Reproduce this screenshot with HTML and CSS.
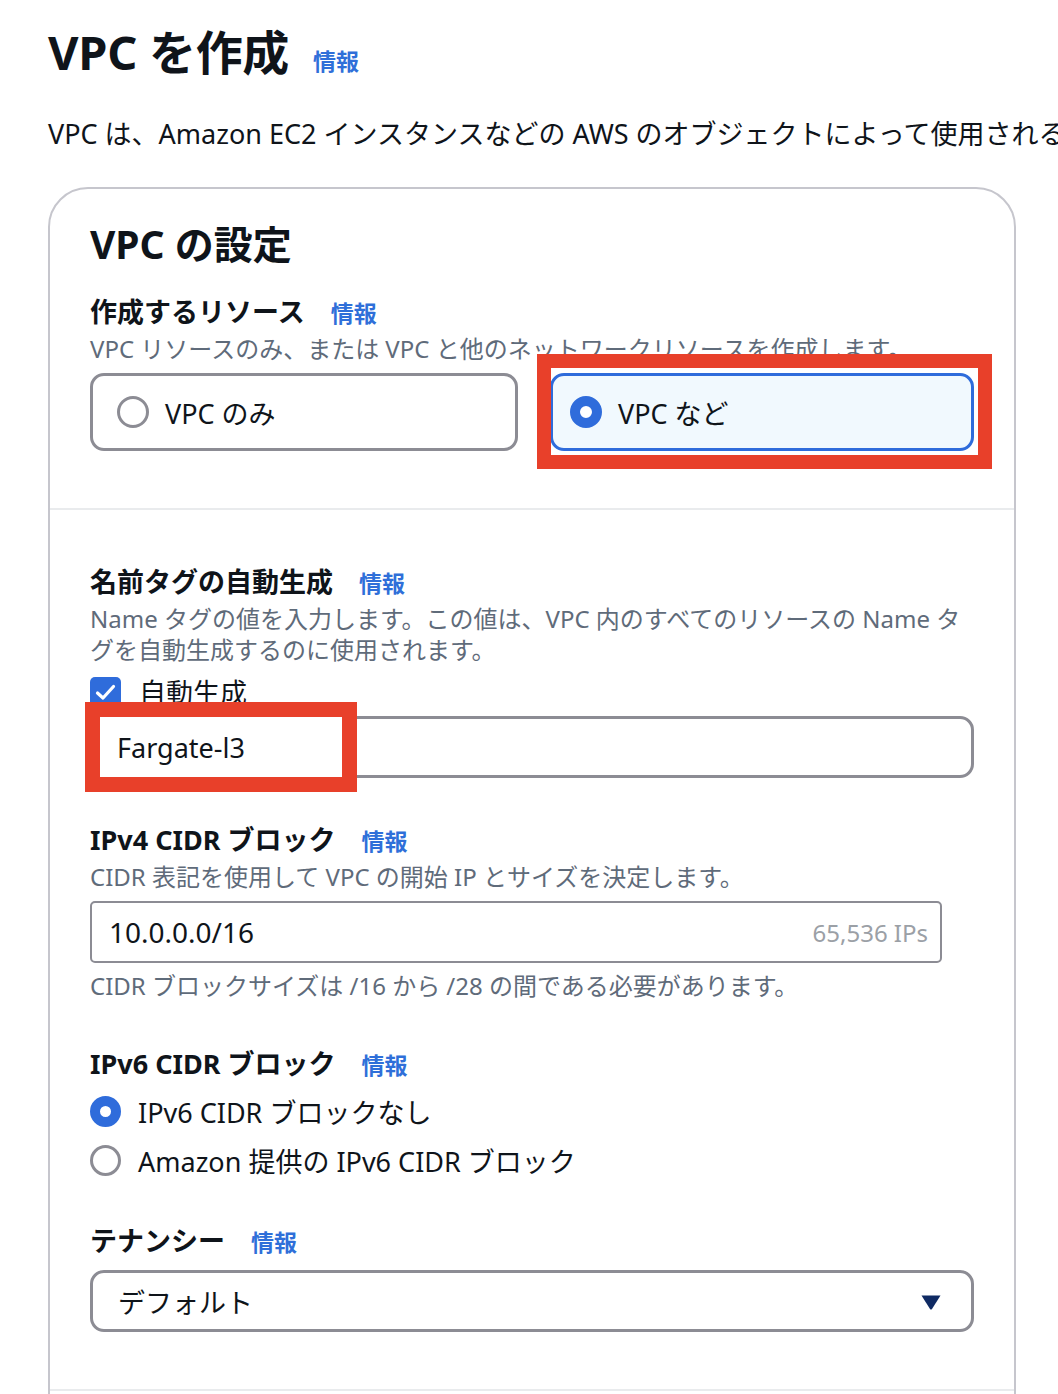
FILE: index.html
```html
<!DOCTYPE html>
<html lang="ja">
<head>
<meta charset="utf-8">
<title>VPC を作成</title>
<link rel="stylesheet" href="styles.css">
</head>
<body>
<main class="page">
  <header class="page-head">
    <h1 class="title">VPC を作成</h1>
    <a class="info info-lg" href="#">情報</a>
  </header>
  <p class="lead">VPC は、Amazon EC2 インスタンスなどの AWS のオブジェクトによって使用される仮想ネットワークです。</p>

  <section class="card">
    <div class="card-section first">
      <h2 class="card-title">VPC の設定</h2>
      <div class="field field-first">
        <div class="label-row"><span class="label">作成するリソース</span><a class="info" href="#">情報</a></div>
        <p class="desc">VPC リソースのみ、または VPC と他のネットワークリソースを作成します。</p>
        <div class="tiles">
          <label class="tile"><span class="radio"></span><span class="tile-text">VPC のみ</span></label>
          <label class="tile tile-on"><span class="radio radio-on"></span><span class="tile-text">VPC など</span></label>
          <span class="mark mark-tile"></span>
        </div>
      </div>
    </div>

    <div class="card-section second">
      <div class="field">
        <div class="label-row"><span class="label">名前タグの自動生成</span><a class="info" href="#">情報</a></div>
        <p class="desc">Name タグの値を入力します。この値は、VPC 内のすべてのリソースの Name タグを自動生成するのに使用されます。</p>
        <div class="check-row">
          <span class="checkbox"><svg width="21" height="17" viewBox="0 0 21 17"><path d="M2.5 9 L8 14 L18.5 2.5" fill="none" stroke="#fff" stroke-width="3.2" stroke-linecap="round" stroke-linejoin="round"/></svg></span>
          <span class="check-text">自動生成</span>
        </div>
        <div class="name-input">
          <span class="name-value">Fargate-l3</span>
          <span class="mark mark-name"></span>
        </div>
      </div>

      <div class="field field-gap">
        <div class="label-row"><span class="label">IPv4 CIDR ブロック</span><a class="info" href="#">情報</a></div>
        <p class="desc">CIDR 表記を使用して VPC の開始 IP とサイズを決定します。</p>
        <div class="cidr-input">
          <span class="cidr-value">10.0.0.0/16</span>
          <span class="cidr-count">65,536 IPs</span>
        </div>
        <p class="desc hint">CIDR ブロックサイズは /16 から /28 の間である必要があります。</p>
      </div>

      <div class="field field-gap3">
        <div class="label-row"><span class="label">IPv6 CIDR ブロック</span><a class="info" href="#">情報</a></div>
        <div class="radio-list">
          <label class="radio-item"><span class="radio radio-sm radio-on"></span><span>IPv6 CIDR ブロックなし</span></label>
          <label class="radio-item"><span class="radio radio-sm"></span><span>Amazon 提供の IPv6 CIDR ブロック</span></label>
        </div>
      </div>

      <div class="field field-gap2">
        <div class="label-row"><span class="label">テナンシー</span><a class="info" href="#">情報</a></div>
        <div class="select">
          <span class="select-value">デフォルト</span>
          <svg class="caret" width="20" height="15" viewBox="0 0 20 15"><path d="M0.5 0.5 H19.5 L11 14 Q10 15.2 9 14 Z" fill="#0f2a63"/></svg>
        </div>
      </div>
    </div>
    <div class="card-section rest"></div>
  </section>
</main>
</body>
</html>
```

FILE: styles.css
```css
* { box-sizing: border-box; }

html, body {
  margin: 0;
  padding: 0;
  background: #ffffff;
  overflow: hidden;
}

body {
  font-family: "Noto Sans", "Noto Sans CJK JP", sans-serif;
  color: #0f141a;
}

.page {
  width: 1058px;
  padding: 24px 0 0 48px;
}

.page-head {
  display: flex;
  align-items: baseline;
  gap: 24px;
  height: 56px;
}

.title {
  margin: 0;
  font-size: 47px;
  line-height: 56px;
  font-weight: 700;
  letter-spacing: -0.3px;
}

.info {
  color: #2f6fd9;
  font-weight: 700;
  font-size: 23px;
  text-decoration: none;
  font-family: "Noto Sans CJK JP", sans-serif;
}

.lead {
  margin: 36px 0 0;
  font-size: 27px;
  line-height: 36px;
  white-space: nowrap;
}

.card {
  margin-top: 35px;
  width: 968px;
  border: 2px solid #c6c6cd;
  border-radius: 40px 40px 0 0;
  min-height: 1400px;
}

.card-section {
  padding: 54px 40px 57px;
  border-bottom: 2px solid #e9ebed;
}

.card-section.first {
  padding-top: 31px;
}

.card-title {
  margin: 0;
  font-size: 39px;
  line-height: 48px;
  font-weight: 700;
}

.field-first { margin-top: 26px; }
.field-gap { margin-top: 44px; }
.field-gap3 { margin-top: 45px; }
.field-gap2 { margin-top: 38px; }

.label-row {
  display: flex;
  align-items: baseline;
  gap: 26px;
  height: 36px;
}

.label {
  font-size: 27px;
  line-height: 36px;
  font-weight: 700;
}

.desc {
  margin: 3px 0 0;
  font-size: 24px;
  line-height: 31px;
  color: #5f6b7a;
}

/* tiles */
.tiles {
  position: relative;
  margin-top: 9px;
  display: grid;
  grid-template-columns: 428px 424px;
  gap: 32px;
}

.tile {
  height: 78px;
  border: 3px solid #8c8c94;
  border-radius: 14px;
  display: flex;
  align-items: center;
  gap: 16px;
  padding-left: 24px;
  font-size: 27px;
}

.tile-on {
  border-color: #2f6cdb;
  background: #f1f9fe;
  padding-left: 17px;
}

.radio {
  width: 32px;
  height: 32px;
  border-radius: 50%;
  border: 3px solid #8c8c94;
  background: #fff;
  flex: none;
}

.radio-on {
  border: 10px solid #2f6cdb;
}

.radio-sm {
  width: 31px;
  height: 31px;
}

.radio-sm.radio-on {
  border-width: 10px;
}

.mark {
  position: absolute;
  border: 15px solid #e8402a;
  z-index: 1;
}

.mark-tile {
  left: 447px;
  top: -19px;
  width: 455px;
  height: 115px;
  border-width: 14px;
}

/* name tag */
.check-row {
  margin-top: 12px;
  display: flex;
  align-items: center;
  gap: 18px;
  height: 31px;
}

.checkbox {
  width: 31px;
  height: 31px;
  border-radius: 5px;
  background: #2f6cdb;
  display: flex;
  align-items: center;
  justify-content: center;
}

.check-text {
  font-size: 27px;
  line-height: 31px;
}

.name-input {
  position: relative;
  margin-top: 8px;
  height: 62px;
  border: 3px solid #8c8c94;
  border-radius: 14px;
  display: flex;
  align-items: center;
  padding-left: 24px;
}

.name-value {
  position: relative;
  z-index: 2;
  font-size: 27px;
}

.mark-name {
  left: -8px;
  top: -17px;
  width: 272px;
  height: 90px;
  background: #fff;
}

/* cidr */
.cidr-input {
  margin-top: 9px;
  width: 852px;
  height: 62px;
  border: 2px solid #8c8c94;
  border-radius: 5px;
  display: flex;
  align-items: center;
  justify-content: space-between;
  padding: 0 12px 0 17px;
}

.cidr-value {
  font-size: 28px;
}

.cidr-count {
  font-size: 24px;
  color: #9ba0a6;
}

.hint {
  margin-top: 7px;
}

/* ipv6 radios */
.radio-list {
  margin-top: 5px;
  display: flex;
  flex-direction: column;
}

.radio-item {
  display: flex;
  align-items: center;
  gap: 17px;
  height: 49px;
  font-size: 27px;
}

/* select */
.select {
  margin-top: 11px;
  height: 62px;
  border: 3px solid #8c8c94;
  border-radius: 14px;
  display: flex;
  align-items: center;
  justify-content: space-between;
  padding: 0 30px 0 25px;
}

.select-value {
  font-size: 27px;
}

.caret {
  display: block;
  margin-top: 2px;
}

.card-section.rest {
  border-bottom: none;
  padding: 0;
}
```
